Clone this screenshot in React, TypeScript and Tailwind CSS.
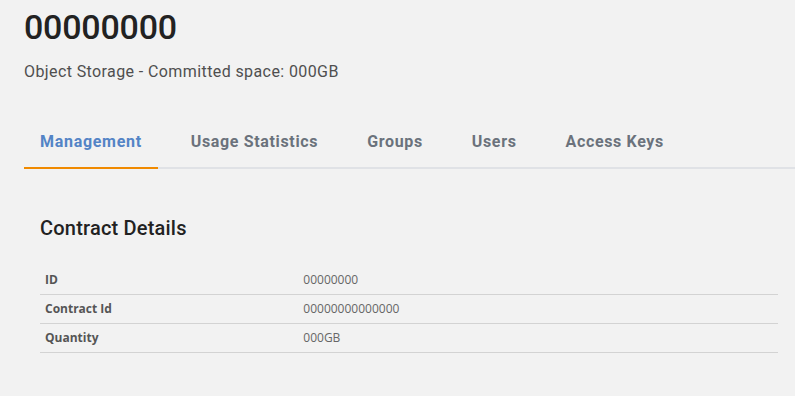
const tabs = ["Management", "Usage Statistics", "Groups", "Users", "Access Keys"];

const rows = [
  { label: "ID", value: "00000000" },
  { label: "Contract Id", value: "00000000000000" },
  { label: "Quantity", value: "000GB" },
];

export default function App() {
  return (
    <div className="min-h-[396px] w-[795px] bg-[#f2f2f2] pl-6 font-['Roboto',sans-serif]">
      <h1 className="pt-[7px] text-[34px] font-medium leading-[41px] tracking-[-0.2px] text-[#222]">00000000</h1>
      <p className="mt-[12px] text-[16px] leading-[24px] tracking-[0.4px] text-[#4f4f4f]">
        Object Storage - Committed space: 000GB
      </p>

      <div className="mt-[34px] flex gap-[17px] border-b-2 border-[#e0e2e6]">
        {tabs.map((t, i) => (
          <div
            key={t}
            className={
              i === 0
                ? "-mb-[2px] border-b-2 border-[#f08a00] px-4 pt-3 pb-[13px] text-[16px] font-bold leading-[24px] tracking-[0.7px] text-[#5384c6]"
                : "-mb-[2px] border-b-2 border-transparent px-4 pt-3 pb-[13px] text-[16px] font-bold leading-[24px] tracking-[0.65px] text-[#6b727c]"
            }
          >
            {t}
          </div>
        ))}
      </div>

      <div className="pl-4 pr-[17px]">
        <h2 className="mt-[45px] text-[20px] font-medium leading-[28px] tracking-[0.2px] text-[#222]">
          Contract Details
        </h2>
        <table className="mt-6 w-full border-collapse font-['Open_Sans',sans-serif] text-[12px] leading-[18px]">
          <tbody>
            {rows.map((r) => (
              <tr key={r.label} className="border-b border-[#d3d3d3]">
                <td className="w-[35%] px-[5px] py-[5px] font-bold text-[#555]">{r.label}</td>
                <td className="px-[5px] py-[5px] text-[#666]">{r.value}</td>
              </tr>
            ))}
          </tbody>
        </table>
      </div>
    </div>
  );
}
